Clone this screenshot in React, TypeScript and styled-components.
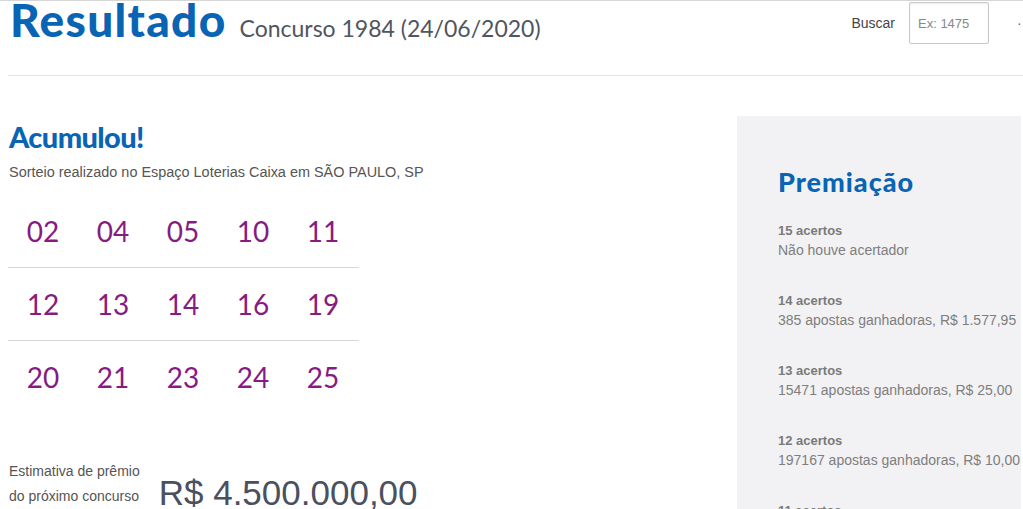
import React from "react";
import styled, { createGlobalStyle } from "styled-components";

const GlobalStyle = createGlobalStyle`
  html, body {
    margin: 0;
    padding: 0;
    background: #fff;
    overflow: hidden;
  }
  body {
    font-family: "Liberation Sans", Arial, sans-serif;
  }
`;

const BLUE = "#0a64b4";

const numbers = [
  ["02", "04", "05", "10", "11"],
  ["12", "13", "14", "16", "19"],
  ["20", "21", "23", "24", "25"],
];

const prizes = [
  { hits: "15 acertos", text: "Não houve acertador" },
  { hits: "14 acertos", text: "385 apostas ganhadoras, R$ 1.577,95" },
  { hits: "13 acertos", text: "15471 apostas ganhadoras, R$ 25,00" },
  { hits: "12 acertos", text: "197167 apostas ganhadoras, R$ 10,00" },
  { hits: "11 acertos", text: "2099583 apostas ganhadoras, R$ 5,00" },
];

export default function App() {
  return (
    <>
      <GlobalStyle />
      <Page>
        <Header>
          <TitleGroup>
            <Title>Resultado</Title>
            <Subtitle>Concurso 1984 (24/06/2020)</Subtitle>
          </TitleGroup>
          <Search>
            <SearchLabel>Buscar</SearchLabel>
            <SearchInput placeholder="Ex: 1475" />
            <SearchGo>·</SearchGo>
          </Search>
        </Header>
        <Main>
          <Result>
            <SectionTitle>Acumulou!</SectionTitle>
            <Place>Sorteio realizado no Espaço Loterias Caixa em SÃO PAULO, SP</Place>
            <Grid>
              {numbers.map((row, i) => (
                <NumberRow key={i} $last={i === numbers.length - 1}>
                  {row.map((n) => (
                    <Ball key={n}>{n}</Ball>
                  ))}
                </NumberRow>
              ))}
            </Grid>
            <Estimate>
              <EstimateLabel>
                Estimativa de prêmio
                <br />
                do próximo concurso
              </EstimateLabel>
              <EstimateValue>R$ 4.500.000,00</EstimateValue>
            </Estimate>
          </Result>
          <Prizes>
            <PanelTitle>Premiação</PanelTitle>
            {prizes.map((p) => (
              <Prize key={p.hits}>
                <Hits>{p.hits}</Hits>
                <PrizeText>{p.text}</PrizeText>
              </Prize>
            ))}
          </Prizes>
        </Main>
      </Page>
    </>
  );
}

const Page = styled.div`
  width: 1015px;
  padding-left: 8px;
  border-top: 1px solid #d6d6d6;
  height: 508px;
  overflow: hidden;
`;

const Header = styled.header`
  display: flex;
  justify-content: space-between;
  align-items: flex-start;
  height: 74px;
  border-bottom: 1px solid #e4e4e4;
`;

const TitleGroup = styled.div`
  display: flex;
  align-items: baseline;
  gap: 13px;
  padding-left: 2px;
  margin-top: -6px;
`;

const Title = styled.h1`
  margin: 0;
  font-family: Lato, "Liberation Sans", sans-serif;
  font-weight: 900;
  font-size: 46px;
  line-height: 50px;
  color: ${BLUE};
  letter-spacing: 1.3px;
`;

const Subtitle = styled.span`
  font-family: Lato, "Liberation Sans", sans-serif;
  font-weight: 400;
  font-size: 23px;
  color: #505560;
`;

const Search = styled.div`
  display: flex;
  align-items: center;
  height: 42px;
  margin-top: 1px;
`;

const SearchLabel = styled.span`
  font-size: 14px;
  color: #444;
  margin-right: 14px;
`;

const SearchInput = styled.input`
  box-sizing: border-box;
  width: 80px;
  height: 42px;
  border: 1px solid #c9c9c9;
  border-radius: 2px;
  box-shadow: inset 0 1px 2px rgba(0, 0, 0, 0.08);
  padding: 0 8px;
  font-family: "Liberation Sans", Arial, sans-serif;
  font-size: 13px;
  color: #555;
  outline: none;
  &::placeholder {
    color: #888;
  }
`;

const SearchGo = styled.span`
  margin-left: 28px;
  width: 6px;
  font-size: 14px;
  color: #666;
`;

const Main = styled.main`
  display: flex;
  margin-top: 40px;
`;

const Result = styled.section`
  width: 729px;
  padding-top: 4px;
`;

const SectionTitle = styled.h2`
  margin: 0 0 0 1px;
  font-family: Lato, "Liberation Sans", sans-serif;
  font-weight: 900;
  font-size: 29px;
  line-height: 34px;
  color: ${BLUE};
  letter-spacing: -0.6px;
`;

const Place = styled.p`
  margin: 9px 0 0 1px;
  font-size: 14.45px;
  line-height: 18px;
  color: #555;
`;

const Grid = styled.div`
  width: 351px;
  margin-top: 14px;
`;

const NumberRow = styled.div<{ $last?: boolean }>`
  display: grid;
  grid-template-columns: repeat(5, 70px);
  height: 72px;
  align-items: center;
  border-bottom: ${(p) => (p.$last ? "none" : "1px solid #d8d8d8")};
`;

const Ball = styled.span`
  text-align: center;
  font-family: Lato, "Liberation Sans", sans-serif;
  font-weight: 400;
  font-size: 28px;
  color: #861b82;
`;

const Estimate = styled.div`
  display: flex;
  align-items: flex-end;
  gap: 19px;
  margin-top: 46px;
`;

const EstimateLabel = styled.div`
  font-size: 14px;
  line-height: 25px;
  color: #555;
  margin-left: 1px;
`;

const EstimateValue = styled.div`
  font-size: 35px;
  line-height: 40px;
  color: #4a5060;
  margin-bottom: -4px;
`;

const Prizes = styled.aside`
  width: 243px;
  height: 400px;
  background: #f2f2f4;
  padding: 50px 0 0 41px;
`;

const PanelTitle = styled.h3`
  margin: 0 0 23px;
  font-family: Lato, "Liberation Sans", sans-serif;
  font-weight: 900;
  font-size: 27px;
  line-height: 32px;
  color: ${BLUE};
  letter-spacing: 1px;
`;

const Prize = styled.div`
  height: 70px;
`;

const Hits = styled.div`
  font-size: 13px;
  font-weight: 700;
  line-height: 19px;
  color: #7a7a7a;
`;

const PrizeText = styled.div`
  font-size: 14px;
  line-height: 20px;
  color: #7e7e7e;
`;
